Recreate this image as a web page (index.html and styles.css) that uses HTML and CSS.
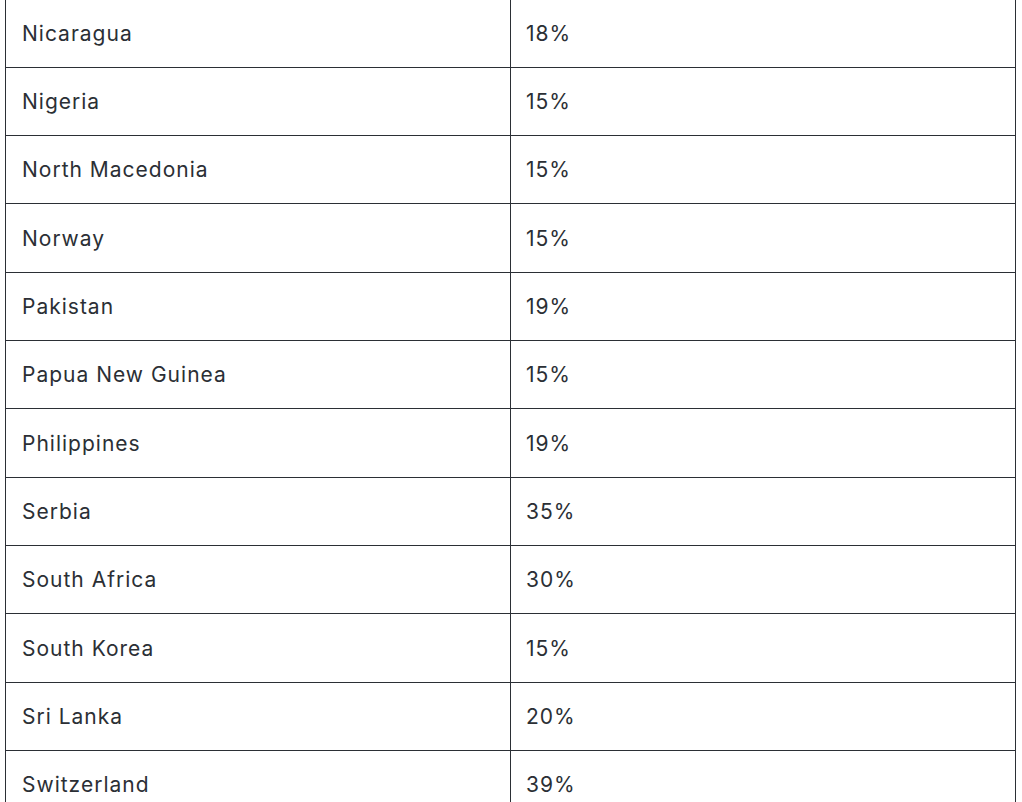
FILE: index.html
```html
<!DOCTYPE html>
<html>
<head>
<meta charset="utf-8">
<link rel="stylesheet" href="styles.css">
</head>
<body>
<div class="wrap">
<table class="rates">
<tbody>
<tr><td>Nicaragua</td><td>18%</td></tr>
<tr><td>Nigeria</td><td>15%</td></tr>
<tr><td>North Macedonia</td><td>15%</td></tr>
<tr><td>Norway</td><td>15%</td></tr>
<tr><td>Pakistan</td><td>19%</td></tr>
<tr><td>Papua New Guinea</td><td>15%</td></tr>
<tr><td>Philippines</td><td>19%</td></tr>
<tr><td>Serbia</td><td>35%</td></tr>
<tr><td>South Africa</td><td>30%</td></tr>
<tr><td>South Korea</td><td>15%</td></tr>
<tr><td>Sri Lanka</td><td>20%</td></tr>
<tr><td>Switzerland</td><td>39%</td></tr>
</tbody>
</table>
</div>
</body>
</html>
```
FILE: styles.css
```css
html, body {
  margin: 0;
  padding: 0;
  background: #ffffff;
}
.wrap {
  padding-left: 5px;
  margin-top: -1.5px;
}
.rates {
  width: 1011px;
  border-collapse: collapse;
  table-layout: fixed;
  font-family: Inter, "Noto Sans", sans-serif;
  font-size: 21px;
  letter-spacing: 1px;
  color: #2b2f35;
}
.rates td {
  border: 1px solid #2b2f35;
  height: 68.33px;
  padding: 0 16px;
  box-sizing: border-box;
  vertical-align: middle;
}
.rates td:first-child {
  width: 505px;
}
.rates td + td {
  padding-left: 15px;
}
```
